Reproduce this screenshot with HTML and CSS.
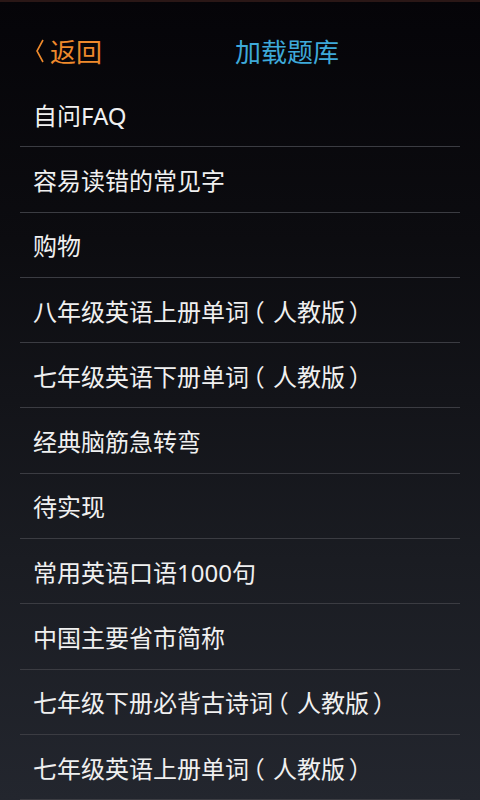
FILE: index.html
```html
<!DOCTYPE html>
<html lang="zh-CN">

<head>
  <meta charset="UTF-8" />
  <meta name="viewport" content="width=device-width, initial-scale=1.0" />
  <title>加载题库</title>
  <link rel="stylesheet" href="styles.css">
</head>

<body>
  <div class="screen">
    <!-- Header -->
    <div class="top-bar">
      <div class="back-btn">
        <svg class="back-icon" width="10" height="24" viewBox="0 0 10 24">
          <polyline points="8,1 2,12 8,23" fill="none" stroke="#ef8a2c" stroke-width="1.6" />
        </svg>
        <span>返回</span>
      </div>
      <div class="title">加载题库</div>
    </div>

    <!-- Question bank list -->
    <ul class="bank-list">
      <li>自问FAQ</li>
      <li>容易读错的常见字</li>
      <li>购物</li>
      <li>八年级英语上册单词<span class="br">（</span>人教版<span class="br">）</span></li>
      <li>七年级英语下册单词<span class="br">（</span>人教版<span class="br">）</span></li>
      <li>经典脑筋急转弯</li>
      <li>待实现</li>
      <li>常用英语口语1000句</li>
      <li>中国主要省市简称</li>
      <li>七年级下册必背古诗词<span class="br">（</span>人教版<span class="br">）</span></li>
      <li>七年级英语上册单词<span class="br">（</span>人教版<span class="br">）</span></li>
    </ul>
  </div>
</body>

</html>
```

FILE: styles.css
```css
:root {
  --orange: #ef8a2c;
  --blue: #3ea9d9;
  --text: #f0f0f0;
  --line: #3b3c42;
}

* {
  box-sizing: border-box;
}

html,
body {
  margin: 0;
  padding: 0;
  width: 100%;
  height: 100%;
  font-family: "Noto Sans", "Noto Sans CJK SC", sans-serif;
  color: var(--text);
}

body {
  background: linear-gradient(to bottom, #050408 0%, #0c0c10 30%, #1a1c22 70%, #23262e 100%);
  overflow: hidden;
}

.screen {
  border-top: 2px solid #2a1716;
}

.top-bar {
  display: flex;
  align-items: center;
  height: 80px;
  padding-top: 18px;
}

.back-btn {
  display: flex;
  align-items: center;
  gap: 5px;
  padding-left: 35px;
  width: 102px;
  color: var(--orange);
  font-size: 26px;
}

.back-icon {
  flex-shrink: 0;
}

.title {
  flex: 1;
  text-align: center;
  padding-right: 8px;
  color: var(--blue);
  font-size: 26px;
}

.bank-list {
  list-style: none;
  margin: 0;
  padding: 0 20px;
}

.bank-list li {
  display: flex;
  align-items: center;
  height: 65.3px;
  padding-left: 13px;
  font-size: 24px;
  white-space: nowrap;
  border-bottom: 1px solid var(--line);
}

/* device font draws brackets centred in a full cell */
.br {
  font-feature-settings: "halt";
  padding-left: 0.16em;
  margin-right: 0.34em;
}
```
